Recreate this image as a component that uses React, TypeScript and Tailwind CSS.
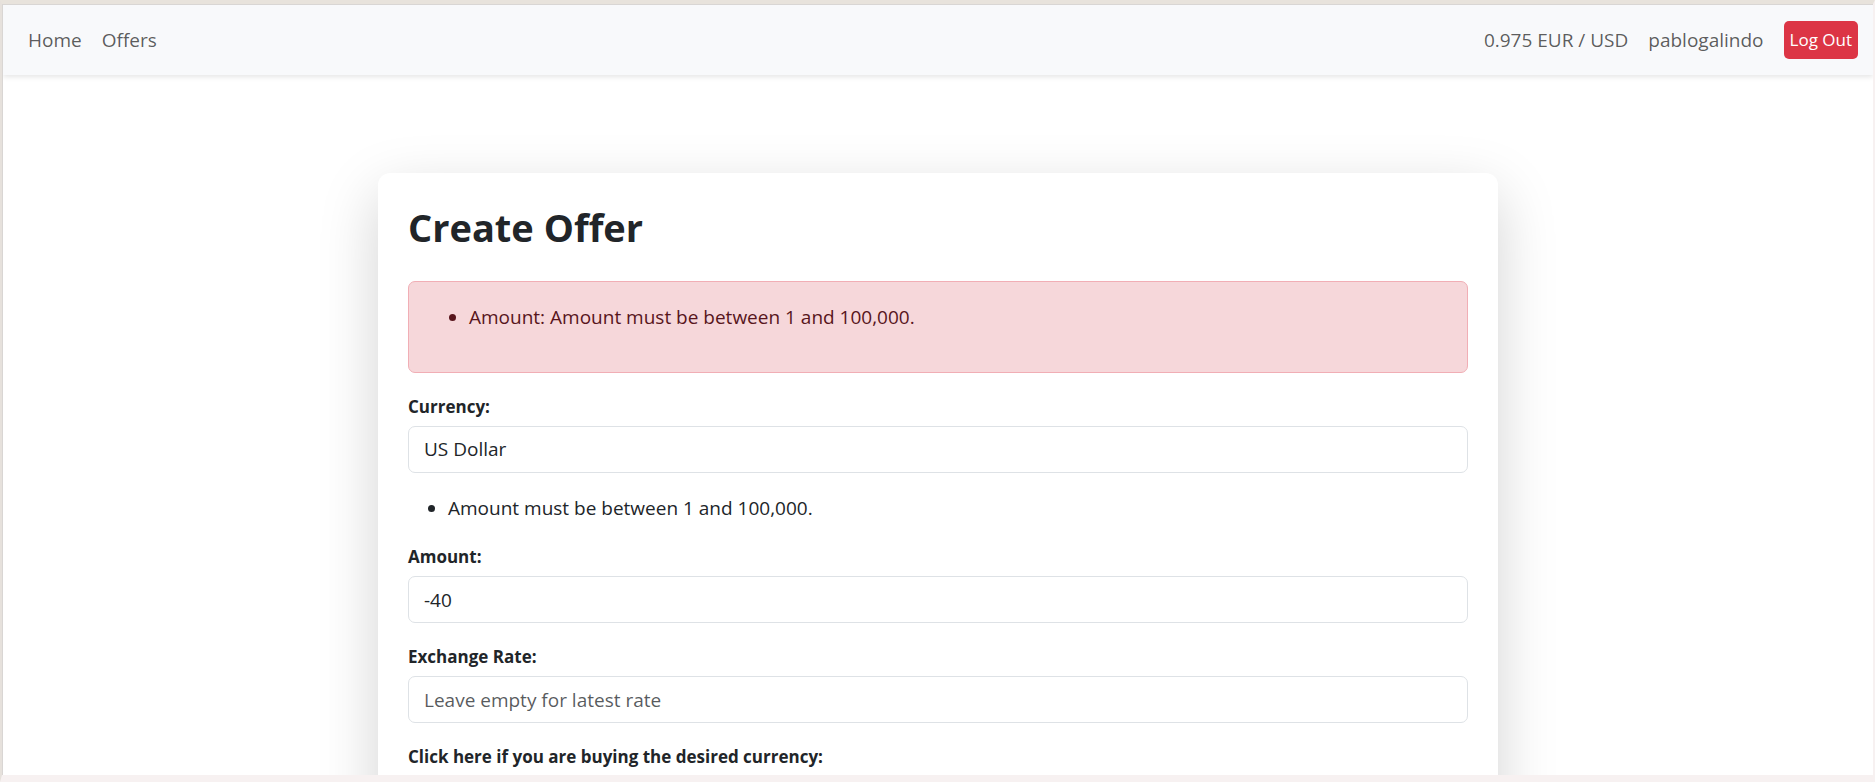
import type { ReactNode } from "react";

const control =
  "block h-[47px] w-full appearance-none rounded-[7px] border border-[#dee2e6] bg-white px-[15px] text-[19px] text-[#212529] outline-none placeholder:text-[#212529]/75 placeholder:opacity-100 focus:border-[#86b7fe]";

function Field({ id, label, children }: { id: string; label: string; children: ReactNode }) {
  return (
    <div className="mb-5">
      <label htmlFor={id} className="mb-[5px] block text-[17px] leading-[28px] font-bold">
        {label}
      </label>
      {children}
    </div>
  );
}

function NavBar() {
  return (
    <nav className="relative flex h-[70px] shrink-0 items-center justify-between bg-[#f8f9fb] pr-[15px] pl-[25px] text-[19px] text-black/65 shadow-[0_2px_5px_rgba(0,0,0,0.1)]">
      <div className="flex items-center gap-5">
        <a href="#home">Home</a>
        <a href="#offers">Offers</a>
      </div>
      <div className="flex items-center gap-5">
        <span>0.975 EUR / USD</span>
        <a href="#profile">pablogalindo</a>
        <button type="button" className="h-[38px] rounded-[5px] bg-[#dc3545] px-[6px] text-[17px] text-white">
          Log Out
        </button>
      </div>
    </nav>
  );
}

export default function App() {
  return (
    <div className="h-screen overflow-hidden border-t-4 border-r-2 border-b-[7px] border-l-2 border-t-[#e8e3dc] border-r-[#f7f1f1] border-b-[#f7f1f1] border-l-[#e6e1dc] bg-white font-['Open_Sans','Noto_Sans',sans-serif] text-[#212529]">
      <div className="flex h-full flex-col overflow-hidden border-t border-l border-[#d9d6d4]">
        <NavBar />
        <main className="px-6 pt-[98px]">
          <form className="mx-auto max-w-[1120px] rounded-[12px] bg-white p-[30px] shadow-[0_20px_60px_rgba(0,0,0,0.175)]">
            <h1 className="mb-[30px] text-[38px] leading-[48px] font-bold">Create Offer</h1>
            <div role="alert" className="mb-5 rounded-[7px] border border-[#f1aeb5] bg-[#f6d7da] p-5 text-[#58151c]">
              <ul className="mb-5 list-disc pl-10 text-[19px] leading-[30px]">
                <li>Amount: Amount must be between 1 and 100,000.</li>
              </ul>
            </div>
            <Field id="currency" label="Currency:">
              <select id="currency" className={control}>
                <option>US Dollar</option>
              </select>
            </Field>
            <ul className="mb-5 list-disc pl-10 text-[19px] leading-[30px]">
              <li>Amount must be between 1 and 100,000.</li>
            </ul>
            <Field id="amount" label="Amount:">
              <input id="amount" type="text" inputMode="numeric" defaultValue="-40" className={control} />
            </Field>
            <Field id="rate" label="Exchange Rate:">
              <input id="rate" type="text" placeholder="Leave empty for latest rate" className={control} />
            </Field>
            <Field id="buying" label="Click here if you are buying the desired currency:">
              <input id="buying" type="checkbox" className="block size-5" />
            </Field>
          </form>
        </main>
      </div>
    </div>
  );
}
